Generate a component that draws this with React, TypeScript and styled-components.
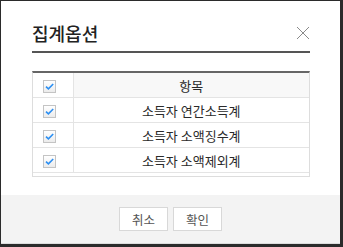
import React from 'react';
import styled, { createGlobalStyle } from 'styled-components';

const GlobalStyle = createGlobalStyle`
  html, body {
    margin: 0;
    padding: 0;
    background: #2b2b2b;
  }
  body {
    font-family: 'Noto Sans CJK KR', 'Noto Sans', sans-serif;
  }
`;

const Dialog = styled.div`
  margin: 1px 0 0 1px;
  width: 339px;
  height: 243px;
  background: #ffffff;
  display: flex;
  flex-direction: column;
  box-sizing: border-box;
`;

const Header = styled.div`
  margin: 0 30px 0 31px;
  padding: 20px 0 6px;
  display: flex;
  align-items: center;
  justify-content: space-between;
  border-bottom: 2px solid #555555;
`;

const Title = styled.h1`
  margin: 0;
  font-size: 18px;
  line-height: 24px;
  font-weight: 500;
  color: #222222;
`;

const CloseButton = styled.button`
  border: 0;
  background: none;
  padding: 0;
  width: 14px;
  height: 14px;
  display: flex;
  cursor: pointer;
`;

const Body = styled.div`
  flex: 1;
  padding: 18px 30px 0 31px;
`;

const ListBox = styled.div`
  height: 106px;
  box-sizing: border-box;
  border: 1px solid #dddddd;
  border-top: 2px solid #666666;
`;

const Table = styled.table`
  width: 100%;
  border-collapse: collapse;
  table-layout: fixed;
`;

const Cell = styled.td<{ $head?: boolean }>`
  height: 24px;
  padding: 0;
  border-bottom: 1px solid #e4e4e4;
  background: ${(p) => (p.$head ? '#f8f8f8' : '#ffffff')};
  font-size: 13px;
  color: #2a2a2a;
  text-align: center;
  vertical-align: middle;
`;

const CheckCell = styled(Cell)`
  width: 40px;
  padding-right: 7px;
  box-sizing: border-box;
  border-right: 1px solid #e4e4e4;
  background: #ffffff;
`;

const Box = styled.span`
  display: inline-flex;
  width: 13px;
  height: 13px;
  box-sizing: border-box;
  border: 1px solid #c4c4c4;
  background: linear-gradient(#ffffff, #ececec);
  align-items: center;
  justify-content: center;
  vertical-align: middle;
`;

const Footer = styled.div`
  height: 49px;
  box-sizing: border-box;
  background: #f3f3f3;
  border-bottom: 1px solid #dcdcdc;
  display: flex;
  align-items: center;
  justify-content: center;
  gap: 5px;
`;

const Button = styled.button`
  height: 24px;
  padding: 0 12px;
  border: 1px solid #d8d8d8;
  background: #ffffff;
  font-family: inherit;
  font-size: 12.5px;
  color: #555555;
  cursor: pointer;
`;

const Check = () => (
  <Box>
    <svg width="9" height="7" viewBox="0 0 9 7">
      <path d="M1 3.6 L3.4 5.8 L8.2 1" fill="none" stroke="#2c8ff2" strokeWidth="1.6" />
    </svg>
  </Box>
);

const rows = ['소득자 연간소득계', '소득자 소액징수계', '소득자 소액제외계'];

const App: React.FC = () => {
  return (
    <>
      <GlobalStyle />
      <Dialog>
        <Header>
          <Title>집계옵션</Title>
          <CloseButton aria-label="닫기">
            <svg width="14" height="14" viewBox="0 0 14 14">
              <path d="M1 1 L13 13 M13 1 L1 13" stroke="#8a8a8a" strokeWidth="1" />
            </svg>
          </CloseButton>
        </Header>
        <Body>
          <ListBox>
            <Table>
              <tbody>
                <tr>
                  <CheckCell $head>
                    <Check />
                  </CheckCell>
                  <Cell $head>항목</Cell>
                </tr>
                {rows.map((r) => (
                  <tr key={r}>
                    <CheckCell>
                      <Check />
                    </CheckCell>
                    <Cell>{r}</Cell>
                  </tr>
                ))}
              </tbody>
            </Table>
          </ListBox>
        </Body>
        <Footer>
          <Button>취소</Button>
          <Button>확인</Button>
        </Footer>
      </Dialog>
    </>
  );
};

export default App;
